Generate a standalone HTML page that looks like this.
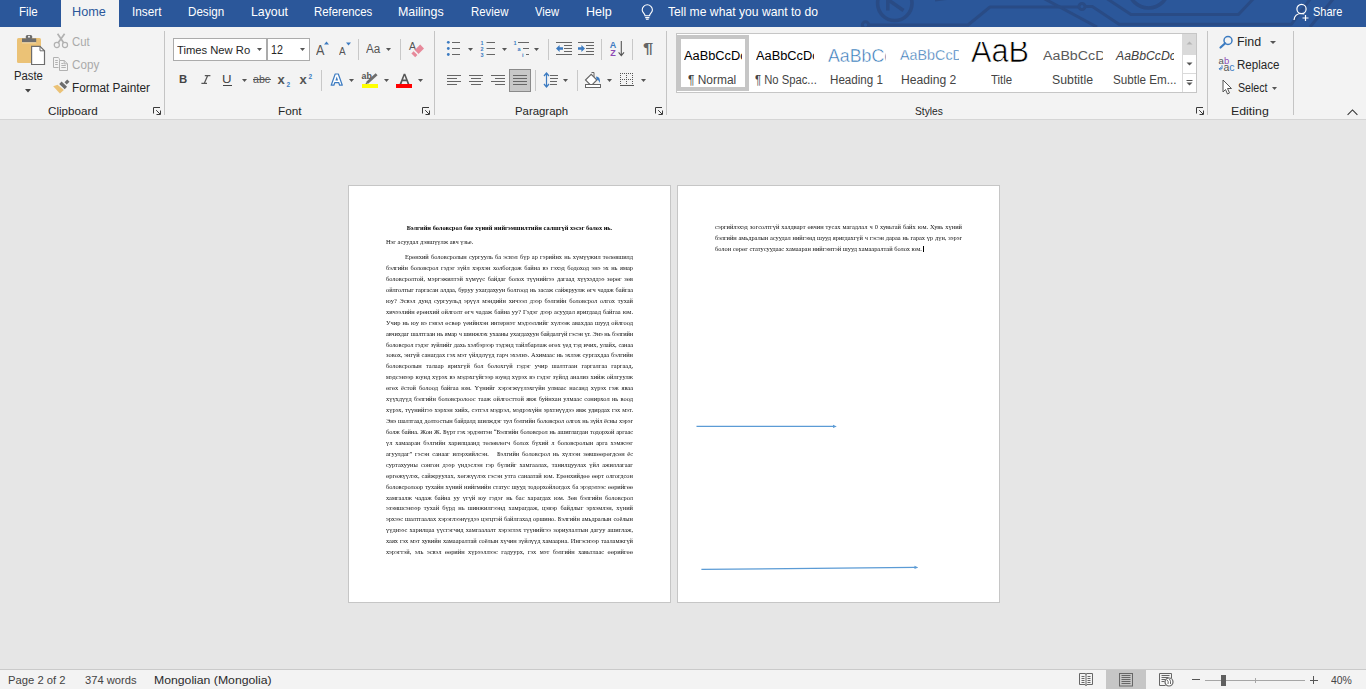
<!DOCTYPE html>
<html><head><meta charset="utf-8"><style>
html,body{margin:0;padding:0}
body{width:1366px;height:689px;overflow:hidden;position:relative;background:#E6E6E6;font-family:"Liberation Sans",sans-serif}
.t{position:absolute;white-space:pre;line-height:1;transform-origin:0 0}
svg{overflow:visible}
.ln{position:absolute;will-change:transform;white-space:nowrap;font-family:"Liberation Serif",serif;font-size:6.4px;line-height:11px;height:11px;color:#111;text-align:justify;text-align-last:justify;overflow:visible}
</style></head><body>
<div style="position:absolute;left:0px;top:0px;width:1366px;height:27px;background:#2B579A;"></div>
<svg style="position:absolute;left:0px;top:0px;overflow:hidden" width="1366" height="27" viewBox="0 0 1366 27"><g fill="none" stroke="#294B85" stroke-width="3" stroke-linejoin="round">
<circle cx="894.8" cy="3.3" r="17.2" stroke-width="3.6"/>
<path d="M887.8 -1 V10.5 M887.8 -0.5 L903.5 10.5" stroke-width="3.6"/>
<path d="M869 25 L968 25 L990 7 L1079 7"/>
<circle cx="865.5" cy="25" r="3.2"/>
<circle cx="1082" cy="6.5" r="3"/>
<circle cx="1148.5" cy="-12" r="20" stroke-width="3.6"/>
<path d="M1106 -2 L1131 14.6 H1238.5 L1254 -2"/>
<path d="M1085 6.5 H1092.3 L1119 24.2 H1291.5 L1311 -2"/>
<path d="M1043 -2 L1097 27"/>
<path d="M1334 -2 L1310 27"/>
<path d="M935 0 L950 -2"/>
</g></svg>
<div style="position:absolute;left:61px;top:0px;width:58px;height:27px;background:#F3F3F3;"></div>
<div class="t" id="tab_file" style="left:19.45px;top:5.29px;font-size:13px;color:#FFFFFF;font-family:'Liberation Sans';font-weight:400;font-style:normal;transform:scaleX(0.8908);">File</div>
<div class="t" id="tab_home" style="left:72.41px;top:5.29px;font-size:13px;color:#2B579A;font-family:'Liberation Sans';font-weight:400;font-style:normal;transform:scaleX(0.9739);">Home</div>
<div class="t" id="tab_insert" style="left:132.09px;top:5.29px;font-size:13px;color:#FFFFFF;font-family:'Liberation Sans';font-weight:400;font-style:normal;transform:scaleX(0.9062);">Insert</div>
<div class="t" id="tab_design" style="left:187.90px;top:5.29px;font-size:13px;color:#FFFFFF;font-family:'Liberation Sans';font-weight:400;font-style:normal;transform:scaleX(0.8951);">Design</div>
<div class="t" id="tab_layout" style="left:251.05px;top:5.29px;font-size:13px;color:#FFFFFF;font-family:'Liberation Sans';font-weight:400;font-style:normal;transform:scaleX(0.9474);">Layout</div>
<div class="t" id="tab_refs" style="left:314.12px;top:5.29px;font-size:13px;color:#FFFFFF;font-family:'Liberation Sans';font-weight:400;font-style:normal;transform:scaleX(0.8769);">References</div>
<div class="t" id="tab_mail" style="left:398.04px;top:5.29px;font-size:13px;color:#FFFFFF;font-family:'Liberation Sans';font-weight:400;font-style:normal;transform:scaleX(0.9574);">Mailings</div>
<div class="t" id="tab_review" style="left:470.67px;top:5.29px;font-size:13px;color:#FFFFFF;font-family:'Liberation Sans';font-weight:400;font-style:normal;transform:scaleX(0.8764);">Review</div>
<div class="t" id="tab_view" style="left:535.00px;top:5.29px;font-size:13px;color:#FFFFFF;font-family:'Liberation Sans';font-weight:400;font-style:normal;transform:scaleX(0.8611);">View</div>
<div class="t" id="tab_help" style="left:586.03px;top:5.29px;font-size:13px;color:#FFFFFF;font-family:'Liberation Sans';font-weight:400;font-style:normal;transform:scaleX(0.9660);">Help</div>
<div class="t" id="tab_tell" style="left:667.97px;top:5.29px;font-size:13px;color:#FFFFFF;font-family:'Liberation Sans';font-weight:400;font-style:normal;transform:scaleX(0.9348);">Tell me what you want to do</div>
<div class="t" id="tab_share" style="left:1313.23px;top:5.29px;font-size:13px;color:#FFFFFF;font-family:'Liberation Sans';font-weight:400;font-style:normal;transform:scaleX(0.8441);">Share</div>
<svg style="position:absolute;left:639px;top:3px;" width="18" height="20" viewBox="0 0 18 20"><g fill="none" stroke="#fff" stroke-width="1.1">
<path d="M6 12.8 C6 10.6 3.2 9.6 3.2 6.9 A5.1 5.1 0 0 1 13.4 6.9 C13.4 9.6 10.6 10.6 10.6 12.8 Z"/>
<path d="M6.2 14.6 H10.4 M6.9 16.2 H9.7"/></g></svg>
<svg style="position:absolute;left:1293px;top:3px;" width="18" height="18" viewBox="0 0 18 18"><g fill="none" stroke="#fff" stroke-width="1.2">
<circle cx="8.5" cy="6" r="4.6"/>
<path d="M1 17 C1.5 12.5 4.5 10.5 8.5 10.5 C9.5 10.5 10.5 10.7 11.3 11"/>
<path d="M12.5 12 V18 M9.5 15 H15.5"/></g></svg>
<div style="position:absolute;left:0px;top:27px;width:1366px;height:92px;background:#F3F3F3;"></div>
<div style="position:absolute;left:61px;top:27px;width:58px;height:1px;background:#F3F3F3;"></div>
<div style="position:absolute;left:0px;top:119px;width:1366px;height:1px;background:#D5D5D5;"></div>
<div style="position:absolute;left:164px;top:31px;width:1px;height:84px;background:#C4C4C4;"></div>
<div style="position:absolute;left:434px;top:31px;width:1px;height:84px;background:#C4C4C4;"></div>
<div style="position:absolute;left:666px;top:31px;width:1px;height:84px;background:#C4C4C4;"></div>
<div style="position:absolute;left:1207px;top:31px;width:1px;height:84px;background:#C4C4C4;"></div>
<div style="position:absolute;left:1293px;top:31px;width:1px;height:84px;background:#C4C4C4;"></div>
<div class="t" id="lbl_clip" style="left:48.22px;top:106.49px;font-size:11px;color:#262626;font-family:'Liberation Sans';font-weight:400;font-style:normal;transform:scaleX(1.0570);">Clipboard</div>
<div class="t" id="lbl_font" style="left:278.48px;top:106.49px;font-size:11px;color:#262626;font-family:'Liberation Sans';font-weight:400;font-style:normal;transform:scaleX(1.0737);">Font</div>
<div class="t" id="lbl_para" style="left:515.35px;top:106.49px;font-size:11px;color:#262626;font-family:'Liberation Sans';font-weight:400;font-style:normal;transform:scaleX(1.0345);">Paragraph</div>
<div class="t" id="lbl_styles" style="left:914.52px;top:106.49px;font-size:11px;color:#262626;font-family:'Liberation Sans';font-weight:400;font-style:normal;transform:scaleX(0.9300);">Styles</div>
<div class="t" id="lbl_edit" style="left:1231.29px;top:106.49px;font-size:11px;color:#262626;font-family:'Liberation Sans';font-weight:400;font-style:normal;transform:scaleX(1.1221);">Editing</div>
<svg style="position:absolute;left:153px;top:107px;" width="9" height="9" viewBox="0 0 9 9"><g fill="none" stroke="#3A3A3A" stroke-width="1"><path d="M0.5 6.5 V0.5 H7"/><path d="M3.2 3.2 L7 7"/><path d="M3.5 7.5 H7.5 V3.5"/></g></svg>
<svg style="position:absolute;left:422px;top:107px;" width="9" height="9" viewBox="0 0 9 9"><g fill="none" stroke="#3A3A3A" stroke-width="1"><path d="M0.5 6.5 V0.5 H7"/><path d="M3.2 3.2 L7 7"/><path d="M3.5 7.5 H7.5 V3.5"/></g></svg>
<svg style="position:absolute;left:655px;top:107px;" width="9" height="9" viewBox="0 0 9 9"><g fill="none" stroke="#3A3A3A" stroke-width="1"><path d="M0.5 6.5 V0.5 H7"/><path d="M3.2 3.2 L7 7"/><path d="M3.5 7.5 H7.5 V3.5"/></g></svg>
<svg style="position:absolute;left:1196px;top:107px;" width="9" height="9" viewBox="0 0 9 9"><g fill="none" stroke="#3A3A3A" stroke-width="1"><path d="M0.5 6.5 V0.5 H7"/><path d="M3.2 3.2 L7 7"/><path d="M3.5 7.5 H7.5 V3.5"/></g></svg>
<svg style="position:absolute;left:1347px;top:109px;" width="12" height="7" viewBox="0 0 12 7"><path d="M0.6 5.8 L5.5 0.9 L10.4 5.8" fill="none" stroke="#333" stroke-width="1.05"/></svg>
<svg style="position:absolute;left:15px;top:33px;" width="32" height="34" viewBox="0 0 32 34">
<rect x="2" y="5" width="24" height="25" rx="1.5" fill="#EBC276"/>
<rect x="7" y="5.4" width="14.2" height="4" fill="#6D6D6D"/>
<rect x="10.8" y="1.9" width="6.4" height="4" rx="1.5" fill="#6D6D6D"/>
<circle cx="14" cy="3.8" r="1" fill="#F3F3F3"/>
<rect x="7" y="9.4" width="14.2" height="0.9" fill="#F6E2BA"/>
<path d="M16.6 13.3 H25 L29.5 17.8 V31.5 H16.6 Z" fill="#fff" stroke="#6D6D6D" stroke-width="1.2"/>
<path d="M25 13.3 V17.8 H29.5" fill="none" stroke="#6D6D6D" stroke-width="1"/>
</svg>
<div class="t" id="cb_paste" style="left:14.22px;top:69.64px;font-size:12px;color:#262626;font-family:'Liberation Sans';font-weight:400;font-style:normal;transform:scaleX(0.9404);">Paste</div>
<svg style="position:absolute;left:25px;top:89px;" width="7" height="4" viewBox="0 0 7 4"><path d="M0 0 H6 L3 3.5 Z" fill="#444"/></svg>
<svg style="position:absolute;left:53px;top:33px;" width="16" height="16" viewBox="0 0 16 16"><g fill="none" stroke="#B1B1B1">
<circle cx="3.8" cy="12" r="2.55" stroke-width="1.2"/><circle cx="12" cy="12" r="2.55" stroke-width="1.2"/>
<path d="M4.6 0.8 L10.6 9.7 M11.6 0.8 L5.2 9.7" stroke-width="1.7"/></g></svg>
<div class="t" id="cb_cut" style="left:72.41px;top:35.84px;font-size:12px;color:#AAAAAA;font-family:'Liberation Sans';font-weight:400;font-style:normal;transform:scaleX(0.9474);">Cut</div>
<svg style="position:absolute;left:53px;top:57px;" width="16" height="15" viewBox="0 0 16 15"><g fill="none" stroke="#B1B1B1" stroke-width="1">
<path d="M6.5 2.8 V1.8 L5.2 0.5 H0.5 V10.5 H5.5"/>
<path d="M2.2 3.5 H4.8 M2.2 5.5 H4.8 M2.2 7.5 H4.8"/>
<path d="M6.5 3.5 H11.2 L14.5 6.8 V13.5 H6.5 Z" fill="#F3F3F3"/>
<path d="M11.2 3.5 V6.8 H14.5 M8.3 6.5 H10.5 M8.3 8.5 H12.8 M8.3 10.5 H12.8"/></g></svg>
<div class="t" id="cb_copy" style="left:72.40px;top:58.54px;font-size:12px;color:#AAAAAA;font-family:'Liberation Sans';font-weight:400;font-style:normal;transform:scaleX(0.9714);">Copy</div>
<svg style="position:absolute;left:53px;top:80px;" width="17" height="15" viewBox="0 0 17 15">
<path d="M0.2 6.2 L4.5 4.7 L10.9 9.9 L6.9 13.4 Z" fill="#EBC276"/>
<path d="M7.4 2.7 L12.9 7.9" stroke="#6D6D6D" stroke-width="3.4"/>
<path d="M12.6 3.4 L15.4 0.7" stroke="#6D6D6D" stroke-width="3.2"/>
</svg>
<div class="t" id="cb_fp" style="left:71.51px;top:81.64px;font-size:12px;color:#262626;font-family:'Liberation Sans';font-weight:400;font-style:normal;transform:scaleX(0.9823);">Format Painter</div>
<div style="position:absolute;left:173px;top:38px;width:94px;height:23px;background:#FFFFFF;box-sizing:border-box;border:1px solid #ABABAB"></div>
<div style="position:absolute;left:267px;top:38px;width:43px;height:23px;background:#FFFFFF;box-sizing:border-box;border:1px solid #ABABAB"></div>
<div class="t" id="f_name" style="left:177.00px;top:44.56px;font-size:11.5px;color:#262626;font-family:'Liberation Sans';font-weight:400;font-style:normal;transform:scaleX(0.9761);">Times New Ro</div>
<div class="t" id="f_size" style="left:270.57px;top:44.14px;font-size:12px;color:#262626;font-family:'Liberation Sans';font-weight:400;font-style:normal;transform:scaleX(0.8929);">12</div>
<svg style="position:absolute;left:257px;top:48px;" width="6" height="4" viewBox="0 0 6 4"><path d="M0 0 H5 L2.5 3 Z" fill="#555"/></svg>
<svg style="position:absolute;left:300px;top:48px;" width="6" height="4" viewBox="0 0 6 4"><path d="M0 0 H5 L2.5 3 Z" fill="#555"/></svg>
<div class="t" id="f_grow" style="left:316.16px;top:42.85px;font-size:14px;color:#555;font-family:'Liberation Sans';font-weight:400;font-style:normal;transform:scaleX(0.9000);font-weight:400">A</div>
<svg style="position:absolute;left:324px;top:41px;" width="6" height="4" viewBox="0 0 6 4"><path d="M0 3.5 H5 L2.5 0.5 Z" fill="#3C7BC1"/></svg>
<div class="t" id="f_shrink" style="left:339.10px;top:46.39px;font-size:11px;color:#555;font-family:'Liberation Sans';font-weight:400;font-style:normal;transform:scaleX(0.9075);">A</div>
<svg style="position:absolute;left:346px;top:42px;" width="6" height="4" viewBox="0 0 6 4"><path d="M0 0.5 H5 L2.5 3.5 Z" fill="#3C7BC1"/></svg>
<div style="position:absolute;left:358px;top:39px;width:1px;height:21px;background:#C8C8C8;"></div>
<div class="t" id="f_case" style="left:366.00px;top:42.54px;font-size:12px;color:#555;font-family:'Liberation Sans';font-weight:400;font-style:normal;transform:scaleX(0.9735);">Aa</div>
<svg style="position:absolute;left:386px;top:48px;" width="6" height="4" viewBox="0 0 6 4"><path d="M0 0 H5 L2.5 3 Z" fill="#555"/></svg>
<div style="position:absolute;left:400px;top:39px;width:1px;height:21px;background:#C8C8C8;"></div>
<svg style="position:absolute;left:409px;top:41px;" width="16" height="16" viewBox="0 0 16 16">
<text x="0" y="8.7" font-family="Liberation Sans" font-size="10.5" fill="#555">A</text>
<path d="M4.3 14.3 L13.1 5.5" stroke="#E7899A" stroke-width="5.4"/>
<path d="M4.9 9.4 L9.5 14" stroke="#F3F3F3" stroke-width="1.5"/>
</svg>
<div class="t" id="f_b" style="left:179.16px;top:74.09px;font-size:11px;color:#444;font-family:'Liberation Sans';font-weight:700;font-style:normal;transform:scaleX(1.0314);">B</div>
<svg style="position:absolute;left:201px;top:75px;" width="10" height="10" viewBox="0 0 10 10"><path d="M3.8 0.6 H9.4 M0.4 8.4 H6 M6.7 0.6 L3.2 8.4" fill="none" stroke="#555" stroke-width="1.25"/></svg>
<div class="t" id="f_u" style="left:221.62px;top:74.09px;font-size:11px;color:#444;font-family:'Liberation Sans';font-weight:400;font-style:normal;transform:scaleX(1.2000);">U</div>
<div style="position:absolute;left:223px;top:85px;width:9px;height:1px;background:#444;"></div>
<svg style="position:absolute;left:242px;top:79px;" width="6" height="4" viewBox="0 0 6 4"><path d="M0 0 H5 L2.5 3 Z" fill="#555"/></svg>
<div class="t" id="f_abc" style="left:253.41px;top:74.09px;font-size:11px;color:#555;font-family:'Liberation Sans';font-weight:400;font-style:normal;transform:scaleX(0.9650);">abc</div>
<div style="position:absolute;left:253px;top:79px;width:18px;height:1px;background:#555;"></div>
<svg style="position:absolute;left:277px;top:73px;" width="15" height="15" viewBox="0 0 15 15"><text x="0.5" y="10.5" font-family="Liberation Sans" font-size="13" font-weight="700" fill="#555">x</text><text x="9.5" y="13.5" font-family="Liberation Sans" font-size="6.5" font-weight="700" fill="#3C7BC1">2</text></svg>
<svg style="position:absolute;left:299px;top:73px;" width="15" height="15" viewBox="0 0 15 15"><text x="0.5" y="10.5" font-family="Liberation Sans" font-size="13" font-weight="700" fill="#555">x</text><text x="9.5" y="5.5" font-family="Liberation Sans" font-size="6.5" font-weight="700" fill="#3C7BC1">2</text></svg>
<div style="position:absolute;left:321px;top:70px;width:1px;height:21px;background:#C8C8C8;"></div>
<svg style="position:absolute;left:330px;top:73px;" width="14" height="14" viewBox="0 0 14 14"><path d="M1.2 12.2 L5.2 1 H8.3 L12.3 12.2 H9.6 L8.8 9.7 H4.7 L3.9 12.2 Z" fill="#fff" stroke="#3C7BC1" stroke-width="1.2" stroke-linejoin="round"/><path d="M5.4 7.6 H8.1 L6.75 3.6 Z" fill="#3C7BC1"/></svg>
<svg style="position:absolute;left:349px;top:79px;" width="6" height="4" viewBox="0 0 6 4"><path d="M0 0 H5 L2.5 3 Z" fill="#555"/></svg>
<svg style="position:absolute;left:361px;top:72px;" width="18" height="17" viewBox="0 0 18 17">
<text x="0.6" y="6.6" font-family="Liberation Sans" font-size="8.8" font-weight="700" fill="#555">ab</text>
<path d="M6.2 10.8 L15.6 2.2" stroke="#6D6D6D" stroke-width="2.8"/>
<path d="M5 12 L6.6 10.2" stroke="#6D6D6D" stroke-width="1.5"/>
<rect x="1" y="12" width="16" height="4" fill="#FFFF00"/></svg>
<svg style="position:absolute;left:384px;top:79px;" width="6" height="4" viewBox="0 0 6 4"><path d="M0 0 H5 L2.5 3 Z" fill="#555"/></svg>
<svg style="position:absolute;left:396px;top:72px;" width="17" height="17" viewBox="0 0 17 17">
<path d="M3.6 12 L7.7 1.8 H9.3 L13.4 12 H11.5 L10.5 9.2 H6.5 L5.5 12 Z M7.1 7.5 H9.9 L8.5 3.8 Z" fill="#555"/>
<rect x="0" y="12" width="16" height="4" fill="#FF0000"/></svg>
<svg style="position:absolute;left:418px;top:79px;" width="6" height="4" viewBox="0 0 6 4"><path d="M0 0 H5 L2.5 3 Z" fill="#555"/></svg>
<svg style="position:absolute;left:446px;top:40px;" width="16" height="16" viewBox="0 0 16 16"><g fill="#3C7BC1"><circle cx="2.3" cy="2.3" r="1.4"/><circle cx="2.3" cy="8.5" r="1.4"/><circle cx="2.3" cy="14.5" r="1.4"/></g>
<g stroke="#666" stroke-width="1"><path d="M6 2.5 H14 M6 8.5 H14 M6 14.5 H14"/></g></svg>
<svg style="position:absolute;left:468px;top:48px;" width="6" height="4" viewBox="0 0 6 4"><path d="M0 0 H5 L2.5 3 Z" fill="#555"/></svg>
<svg style="position:absolute;left:480px;top:40px;" width="16" height="17" viewBox="0 0 16 17"><g fill="#3C7BC1" font-family="Liberation Sans" font-size="5.5" font-weight="700"><text x="0.5" y="5">1</text><text x="0.5" y="11">2</text><text x="0.5" y="17">3</text></g>
<g stroke="#666" stroke-width="1"><path d="M6.5 2.5 H15 M6.5 8.5 H15 M6.5 14.5 H15"/></g></svg>
<svg style="position:absolute;left:502px;top:48px;" width="6" height="4" viewBox="0 0 6 4"><path d="M0 0 H5 L2.5 3 Z" fill="#555"/></svg>
<svg style="position:absolute;left:513px;top:40px;" width="18" height="17" viewBox="0 0 18 17"><g fill="#3C7BC1" font-family="Liberation Sans" font-size="5.5" font-weight="700"><text x="0.5" y="5">1</text><text x="4.5" y="11">a</text><text x="9" y="17">i</text></g>
<g stroke="#666" stroke-width="1"><path d="M5 2.5 H16 M10 8.5 H16 M13 14.5 H16"/></g></svg>
<svg style="position:absolute;left:534px;top:48px;" width="6" height="4" viewBox="0 0 6 4"><path d="M0 0 H5 L2.5 3 Z" fill="#555"/></svg>
<div style="position:absolute;left:548px;top:39px;width:1px;height:21px;background:#C8C8C8;"></div>
<svg style="position:absolute;left:555px;top:42px;" width="18" height="14" viewBox="0 0 18 14"><g stroke="#666" stroke-width="1"><path d="M1 0.5 H17 M9 3.5 H17 M9 6.5 H17 M9 9.5 H17 M1 12.5 H17"/></g>
<path d="M1 6.5 L4.6 3 V5.3 H8 V7.7 H4.6 V10 Z" fill="#3C7BC1"/></svg>
<svg style="position:absolute;left:577px;top:42px;" width="18" height="14" viewBox="0 0 18 14"><g stroke="#666" stroke-width="1"><path d="M1 0.5 H17 M9 3.5 H17 M9 6.5 H17 M9 9.5 H17 M1 12.5 H17"/></g>
<path d="M8 6.5 L4.4 3 V5.3 H1 V7.7 H4.4 V10 Z" fill="#3C7BC1"/></svg>
<div style="position:absolute;left:601px;top:39px;width:1px;height:21px;background:#C8C8C8;"></div>
<svg style="position:absolute;left:609px;top:40px;" width="17" height="17" viewBox="0 0 17 17"><text x="0.8" y="8" font-family="Liberation Sans" font-size="9" font-weight="700" fill="#3C7BC1">A</text>
<text x="1.3" y="16" font-family="Liberation Sans" font-size="9" font-weight="700" fill="#8E49B5">Z</text>
<path d="M12.3 1 V15.3 M9.6 12.3 L12.3 15.6 L15 12.3" fill="none" stroke="#555" stroke-width="1.1"/></svg>
<div style="position:absolute;left:632px;top:39px;width:1px;height:21px;background:#C8C8C8;"></div>
<div class="t" id="p_pil" style="left:643.00px;top:40.00px;font-size:15px;color:#666;font-family:'Liberation Sans';font-weight:700;font-style:normal;transform:scaleX(1.2251);">¶</div>
<svg style="position:absolute;left:446px;top:75px;" width="16" height="13" viewBox="0 0 16 13"><g stroke="#666" stroke-width="1"><path d="M1 0.5 H15"/><path d="M1 3.5 H11"/><path d="M1 6.5 H15"/><path d="M1 9.5 H11"/></g></svg>
<svg style="position:absolute;left:468px;top:75px;" width="16" height="13" viewBox="0 0 16 13"><g stroke="#666" stroke-width="1"><path d="M1 0.5 H15"/><path d="M3 3.5 H13"/><path d="M1 6.5 H15"/><path d="M3 9.5 H13"/></g></svg>
<svg style="position:absolute;left:490px;top:75px;" width="16" height="13" viewBox="0 0 16 13"><g stroke="#666" stroke-width="1"><path d="M1 0.5 H15"/><path d="M5 3.5 H15"/><path d="M1 6.5 H15"/><path d="M5 9.5 H15"/></g></svg>
<div style="position:absolute;left:509px;top:69px;width:22px;height:23px;background:#C8C8C8;box-sizing:border-box;border:1px solid #8A8A8A"></div>
<svg style="position:absolute;left:512px;top:75px;" width="16" height="13" viewBox="0 0 16 13"><g stroke="#666" stroke-width="1"><path d="M1 0.5 H15"/><path d="M1 3.5 H15"/><path d="M1 6.5 H15"/><path d="M1 9.5 H15"/></g></svg>
<div style="position:absolute;left:535px;top:70px;width:1px;height:21px;background:#C8C8C8;"></div>
<svg style="position:absolute;left:543px;top:72px;" width="16" height="16" viewBox="0 0 16 16"><path d="M3.5 1.5 V14.5" stroke="#3C7BC1" stroke-width="1.2"/>
<path d="M1 4 L3.5 1 L6 4 M1 12 L3.5 15 L6 12" fill="none" stroke="#3C7BC1" stroke-width="1.3"/>
<g stroke="#666" stroke-width="1"><path d="M7 3.5 H15 M7 6.5 H15 M7 9.5 H14 M7 12.5 H14"/></g></svg>
<svg style="position:absolute;left:563px;top:79px;" width="6" height="4" viewBox="0 0 6 4"><path d="M0 0 H5 L2.5 3 Z" fill="#555"/></svg>
<div style="position:absolute;left:577px;top:70px;width:1px;height:21px;background:#C8C8C8;"></div>
<svg style="position:absolute;left:584px;top:72px;" width="18" height="16" viewBox="0 0 18 16"><path d="M7.5 0.5 H10 V5" fill="none" stroke="#666" stroke-width="1"/>
<path d="M1.5 8 L7.2 2.3 L12.9 8 L7.2 13.7 Z" fill="#fff" stroke="#666" stroke-width="1.1"/>
<path d="M12 4.5 Q16.8 4.8 15.8 11 Q14.8 8 12.6 7.6 Z" fill="#3C7BC1"/>
<rect x="1.5" y="12.5" width="15" height="3" fill="#fff" stroke="#666" stroke-width="1"/></svg>
<svg style="position:absolute;left:607px;top:79px;" width="6" height="4" viewBox="0 0 6 4"><path d="M0 0 H5 L2.5 3 Z" fill="#555"/></svg>
<svg style="position:absolute;left:620px;top:73px;" width="14" height="14" viewBox="0 0 14 14"><g fill="#555"><rect x="0" y="0" width="1" height="1"/><rect x="2" y="0" width="1" height="1"/><rect x="4" y="0" width="1" height="1"/><rect x="6" y="0" width="1" height="1"/><rect x="8" y="0" width="1" height="1"/><rect x="10" y="0" width="1" height="1"/><rect x="12" y="0" width="1" height="1"/><rect x="0" y="6" width="1" height="1"/><rect x="2" y="6" width="1" height="1"/><rect x="4" y="6" width="1" height="1"/><rect x="6" y="6" width="1" height="1"/><rect x="8" y="6" width="1" height="1"/><rect x="10" y="6" width="1" height="1"/><rect x="12" y="6" width="1" height="1"/><rect x="0" y="0" width="1" height="1"/><rect x="0" y="2" width="1" height="1"/><rect x="0" y="4" width="1" height="1"/><rect x="0" y="6" width="1" height="1"/><rect x="0" y="8" width="1" height="1"/><rect x="0" y="10" width="1" height="1"/><rect x="6" y="0" width="1" height="1"/><rect x="6" y="2" width="1" height="1"/><rect x="6" y="4" width="1" height="1"/><rect x="6" y="6" width="1" height="1"/><rect x="6" y="8" width="1" height="1"/><rect x="6" y="10" width="1" height="1"/><rect x="12" y="0" width="1" height="1"/><rect x="12" y="2" width="1" height="1"/><rect x="12" y="4" width="1" height="1"/><rect x="12" y="6" width="1" height="1"/><rect x="12" y="8" width="1" height="1"/><rect x="12" y="10" width="1" height="1"/></g><rect x="0" y="12" width="14" height="1" fill="#555"/></svg>
<svg style="position:absolute;left:641px;top:79px;" width="6" height="4" viewBox="0 0 6 4"><path d="M0 0 H5 L2.5 3 Z" fill="#555"/></svg>
<div style="position:absolute;left:676px;top:33px;width:521px;height:60px;background:#FFFFFF;box-sizing:border-box;border:1px solid #C6C6C6"></div>
<div style="position:absolute;left:677px;top:35px;width:72px;height:56px;background:transparent;box-sizing:border-box;border:4px solid #C6C6C6"></div>
<div style="position:absolute;left:1182px;top:34px;width:14px;height:58px;background:#FFFFFF;box-sizing:border-box;border-left:1px solid #DADADA"></div>
<div style="position:absolute;left:1183px;top:34px;width:13px;height:20px;background:#DADADA;"></div>
<div style="position:absolute;left:1183px;top:54px;width:13px;height:1px;background:#DADADA;"></div>
<div style="position:absolute;left:1183px;top:73px;width:13px;height:1px;background:#DADADA;"></div>
<svg style="position:absolute;left:1186px;top:41px;" width="7" height="4" viewBox="0 0 7 4"><path d="M0.5 3.5 H6.5 L3.5 0.5 Z" fill="#B5B5B5"/></svg>
<svg style="position:absolute;left:1186px;top:62px;" width="7" height="4" viewBox="0 0 7 4"><path d="M0.5 0.5 H6.5 L3.5 3.5 Z" fill="#555"/></svg>
<svg style="position:absolute;left:1186px;top:80px;" width="7" height="7" viewBox="0 0 7 7"><path d="M0.5 0.5 H6.5" stroke="#555" stroke-width="1"/><path d="M0.5 2.5 H6.5 L3.5 5.5 Z" fill="#555"/></svg>
<div style="position:absolute;left:680px;top:40px;width:62px;height:30px;overflow:hidden">
<div class="t" id="s_n1" style="left:4.00px;top:9.64px;font-size:12px;color:#000;font-family:'Liberation Sans';font-weight:400;font-style:normal;transform:scaleX(1.0681);">AaBbCcDc</div>
</div>
<div class="t" id="s_n2" style="left:688.00px;top:73.84px;font-size:12px;color:#444;font-family:'Liberation Sans';font-weight:400;font-style:normal;transform:scaleX(0.9960);">¶ Normal</div>
<div style="position:absolute;left:750px;top:40px;width:64px;height:30px;overflow:hidden">
<div class="t" id="s_ns1" style="left:6.24px;top:9.64px;font-size:12px;color:#000;font-family:'Liberation Sans';font-weight:400;font-style:normal;transform:scaleX(1.0681);">AaBbCcDc</div>
</div>
<div class="t" id="s_ns2" style="left:754.53px;top:73.84px;font-size:12px;color:#444;font-family:'Liberation Sans';font-weight:400;font-style:normal;transform:scaleX(0.9385);">¶ No Spac...</div>
<div style="position:absolute;left:820px;top:40px;width:66px;height:30px;overflow:hidden">
<div class="t" id="s_h1" style="left:8.00px;top:7.98px;font-size:17.5px;color:#2E74B5;font-family:'Liberation Sans';font-weight:400;font-style:normal;transform:scaleX(1.0134);-webkit-text-stroke:0.45px #fff">AaBbCc</div>
</div>
<div class="t" id="s_h1l" style="left:829.52px;top:73.84px;font-size:12px;color:#444;font-family:'Liberation Sans';font-weight:400;font-style:normal;transform:scaleX(0.9667);">Heading 1</div>
<div style="position:absolute;left:895px;top:40px;width:63.5px;height:30px;overflow:hidden">
<div class="t" id="s_h2" style="left:5.00px;top:7.75px;font-size:14px;color:#2E74B5;font-family:'Liberation Sans';font-weight:400;font-style:normal;transform:scaleX(1.0243);-webkit-text-stroke:0.35px #fff">AaBbCcD</div>
</div>
<div class="t" id="s_h2l" style="left:901.18px;top:73.84px;font-size:12px;color:#444;font-family:'Liberation Sans';font-weight:400;font-style:normal;transform:scaleX(1.0113);">Heading 2</div>
<div style="position:absolute;left:965px;top:42px;width:70px;height:28px;overflow:hidden">
<div class="t" id="s_ti" style="left:6.13px;top:-8.24px;font-size:33px;color:#000;font-family:'Liberation Sans';font-weight:400;font-style:normal;transform:scaleX(0.9303);-webkit-text-stroke:0.7px #fff">AaB</div>
</div>
<div class="t" id="s_til" style="left:991.00px;top:73.84px;font-size:12px;color:#444;font-family:'Liberation Sans';font-weight:400;font-style:normal;transform:scaleX(0.9545);">Title</div>
<div style="position:absolute;left:1038px;top:40px;width:64.5px;height:30px;overflow:hidden">
<div class="t" id="s_st" style="left:5.49px;top:9.64px;font-size:12px;color:#5A5A5A;font-family:'Liberation Sans';font-weight:400;font-style:normal;transform:scaleX(1.1842);">AaBbCcD</div>
</div>
<div class="t" id="s_stl" style="left:1051.97px;top:73.84px;font-size:12px;color:#444;font-family:'Liberation Sans';font-weight:400;font-style:normal;transform:scaleX(1.0256);">Subtitle</div>
<div style="position:absolute;left:1110px;top:40px;width:64px;height:30px;overflow:hidden">
<div class="t" id="s_se" style="left:6.43px;top:9.94px;font-size:12px;color:#404040;font-family:'Liberation Sans';font-weight:400;font-style:italic;transform:scaleX(1.0201);">AaBbCcDc</div>
</div>
<div class="t" id="s_sel" style="left:1113.03px;top:74.34px;font-size:12px;color:#444;font-family:'Liberation Sans';font-weight:400;font-style:normal;transform:scaleX(0.9720);">Subtle Em...</div>
<svg style="position:absolute;left:1219px;top:35px;" width="15" height="13" viewBox="0 0 15 13"><circle cx="9" cy="5.5" r="4" fill="none" stroke="#3C7BC1" stroke-width="1.5"/>
<path d="M6.2 8.3 L1.5 12.5" stroke="#3C7BC1" stroke-width="2.2" stroke-linecap="round"/></svg>
<div class="t" id="e_find" style="left:1236.86px;top:35.74px;font-size:12px;color:#262626;font-family:'Liberation Sans';font-weight:400;font-style:normal;transform:scaleX(1.0367);">Find</div>
<svg style="position:absolute;left:1270px;top:41px;" width="7" height="4" viewBox="0 0 7 4"><path d="M0 0 H6 L3 3 Z" fill="#555"/></svg>
<svg style="position:absolute;left:1218px;top:56px;" width="18" height="16" viewBox="0 0 18 16"><g font-family="Liberation Sans" font-size="9.5">
<text x="0.6" y="7.6" fill="#555">a</text><text x="5.9" y="7.6" fill="#8E49B5">b</text>
<text x="5.6" y="14.6" fill="#555" font-size="10.5">a</text><text x="11.2" y="14.6" fill="#3C7BC1" font-size="10.5">c</text></g>
<path d="M4 9.3 V12.8 H1.3 M2.7 11.3 L1.2 12.8 L2.7 14.3" fill="none" stroke="#3C7BC1" stroke-width="1"/></svg>
<div class="t" id="e_repl" style="left:1236.91px;top:58.74px;font-size:12px;color:#262626;font-family:'Liberation Sans';font-weight:400;font-style:normal;transform:scaleX(0.9631);">Replace</div>
<svg style="position:absolute;left:1222px;top:79px;" width="11" height="16" viewBox="0 0 11 16"><path d="M1 1 L9.5 9.5 H5.5 L7.5 14 L5.5 15 L3.5 10.5 L1 13 Z" fill="#fff" stroke="#555" stroke-width="1" stroke-linejoin="round"/></svg>
<div class="t" id="e_sel" style="left:1237.97px;top:81.64px;font-size:12px;color:#262626;font-family:'Liberation Sans';font-weight:400;font-style:normal;transform:scaleX(0.8856);">Select</div>
<svg style="position:absolute;left:1272px;top:87px;" width="6" height="4" viewBox="0 0 6 4"><path d="M0 0 H5 L2.5 3 Z" fill="#555"/></svg>
<div style="position:absolute;left:0px;top:669px;width:1366px;height:1px;background:#CACACA;"></div>
<div style="position:absolute;left:0px;top:670px;width:1366px;height:19px;background:#F3F3F3;"></div>
<div class="t" id="st_page" style="left:7.95px;top:674.59px;font-size:11px;color:#444;font-family:'Liberation Sans';font-weight:400;font-style:normal;transform:scaleX(1.0225);">Page 2 of 2</div>
<div class="t" id="st_words" style="left:84.51px;top:674.59px;font-size:11px;color:#444;font-family:'Liberation Sans';font-weight:400;font-style:normal;transform:scaleX(1.0164);">374 words</div>
<div class="t" id="st_lang" style="left:153.93px;top:674.59px;font-size:11px;color:#2B2B2B;font-family:'Liberation Sans';font-weight:400;font-style:normal;transform:scaleX(1.1116);">Mongolian (Mongolia)</div>
<div class="t" id="st_zoom" style="left:1330.99px;top:675.49px;font-size:11px;color:#444;font-family:'Liberation Sans';font-weight:400;font-style:normal;transform:scaleX(0.9488);">40%</div>
<div style="position:absolute;left:1106px;top:670px;width:40px;height:19px;background:#C6C6C6;"></div>
<svg style="position:absolute;left:1079px;top:672px;" width="14" height="15" viewBox="0 0 14 15"><g fill="none" stroke="#666" stroke-width="1">
<path d="M0.5 1.5 H6.5 L7 2.5 L7.5 1.5 H13.5 V12.5 H8 L7 13.5 L6 12.5 H0.5 Z"/>
<path d="M7 2 V14"/>
<path d="M2.5 4.5 H5.5 M2.5 6.5 H5.5 M2.5 8.5 H5.5 M2.5 10.5 H5.5 M8.5 4.5 H11.5 M8.5 6.5 H11.5 M8.5 8.5 H11.5 M8.5 10.5 H11.5"/></g></svg>
<svg style="position:absolute;left:1119px;top:673px;" width="14" height="14" viewBox="0 0 14 14"><rect x="0.5" y="0.5" width="13" height="12.5" fill="none" stroke="#666" stroke-width="1"/>
<g stroke="#666" stroke-width="1"><path d="M2.5 2.5 H11.5 M2.5 4.5 H11.5 M2.5 6.5 H11.5 M2.5 8.5 H11.5 M2.5 10.5 H11.5"/></g></svg>
<svg style="position:absolute;left:1159px;top:673px;" width="15" height="14" viewBox="0 0 15 14"><path d="M6.5 12.5 H0.5 V0.5 H12.5 V5" fill="none" stroke="#666" stroke-width="1"/>
<g stroke="#666" stroke-width="1"><path d="M2.5 2.5 H10.5 M2.5 4.5 H9.5 M2.5 6.5 H6.5 M2.5 8.5 H5.5"/></g>
<circle cx="10" cy="9" r="4" fill="#fff" stroke="#666" stroke-width="1.2"/>
<path d="M8 7 Q10 8.5 9 11 M10.5 6 Q12 8 11.5 11" fill="none" stroke="#666" stroke-width="1"/></svg>
<div style="position:absolute;left:1192px;top:679px;width:8px;height:1px;background:#555;"></div>
<div style="position:absolute;left:1205px;top:680px;width:100px;height:1px;background:#A6A6A6;"></div>
<div style="position:absolute;left:1255px;top:678px;width:1px;height:5px;background:#A6A6A6;"></div>
<div style="position:absolute;left:1221px;top:675px;width:5px;height:11px;background:#5F5F5F;"></div>
<div style="position:absolute;left:1310px;top:680px;width:8px;height:1px;background:#555;"></div>
<div style="position:absolute;left:1313px;top:676px;width:1px;height:8px;background:#555;"></div>
<div style="position:absolute;left:348px;top:185px;width:323px;height:418px;background:#FFFFFF;box-sizing:border-box;border:1px solid #C6C6C6"></div>
<div style="position:absolute;left:677px;top:185px;width:323px;height:418px;background:#FFFFFF;box-sizing:border-box;border:1px solid #C6C6C6"></div>
<div class="ln" id="d_title" style="left:386px;top:221.54px;width:247px;font-weight:700;text-align:center;text-align-last:center;">Бэлгийн боловсрол бие хүний нийгэмшилтийн салшгүй хэсэг болох нь.</div>
<style>#d_title{color:#000}</style>
<div class="ln" id="d_l0" style="left:386px;top:236.34px;width:247px;font-weight:400;text-align:left;text-align-last:left;">Нэг асуудал дэвшүүлж авч үзье.</div>
<div class="ln" id="d_p0" style="left:405px;top:251.14px;width:228px;font-weight:400;">Ерөнхий боловсролын сургууль ба эсвэл бүр ар гэрийнх нь хүмүүжил төлөвшилд</div>
<div class="ln" id="d_p1" style="left:386px;top:262.07px;width:247px;font-weight:400;">бэлгийн боловсрол гэдэг зүйл хэрхэн холбогдож байна вэ гэхэд бодоход энэ эх нь ямар</div>
<div class="ln" id="d_p2" style="left:386px;top:272.99px;width:247px;font-weight:400;">боловсролтой, мэргэжилтэй хүмүүс байдаг болох түүнийгээ дагаад хүүхэддээ зөрөг зөв</div>
<div class="ln" id="d_p3" style="left:386px;top:283.92px;width:247px;font-weight:400;letter-spacing:-0.065px;">ойлголтыг гаргасан алдаа, буруу ухагдахуун болгоод нь засаж сайжруулж өгч чадаж байгаа</div>
<div class="ln" id="d_p4" style="left:386px;top:294.85px;width:247px;font-weight:400;">юу? Эсвэл дунд сургуульд эрүүл мэндийн хичээл дээр бэлгийн боловсрол олгох тухай</div>
<div class="ln" id="d_p5" style="left:386px;top:305.77px;width:247px;font-weight:400;">хичээлийн ерөнхий ойлголт өгч чадаж байна уу? Гэдэг дээр асуудал яригдаад байгаа юм.</div>
<div class="ln" id="d_p6" style="left:386px;top:316.70px;width:247px;font-weight:400;">Учир нь юу вэ гэвэл өсвөр үеийнхэн интернэт мэдээллийг хүлээж авахдаа шууд ойлгоод</div>
<div class="ln" id="d_p7" style="left:386px;top:327.62px;width:247px;font-weight:400;letter-spacing:-0.143px;">авчихдаг шалтгаан нь ямар ч шинжлэх ухааны ухагдахуун байдалгүй гэсэн үг. Энэ нь бэлгийн</div>
<div class="ln" id="d_p8" style="left:386px;top:338.55px;width:247px;font-weight:400;letter-spacing:-0.065px;">боловсрол гэдэг зүйлийг дахь хэлбэрээр тэдэнд тайлбарлаж өгөх үед тэд ичих, улайх, санаа</div>
<div class="ln" id="d_p9" style="left:386px;top:349.48px;width:247px;font-weight:400;letter-spacing:-0.007px;">зовох, энгүй санагдах гэх мэт үйлдлүүд гарч эхэлнэ. Ахимаас нь эхлэж сургахдаа бэлгийн</div>
<div class="ln" id="d_p10" style="left:386px;top:360.40px;width:247px;font-weight:400;">боловсролын талаар ярихгүй бол болохгүй гэдэг учир шалтгаан гаргалгаа гаргаад,</div>
<div class="ln" id="d_p11" style="left:386px;top:371.33px;width:247px;font-weight:400;">мэдсэнээр юунд хүрэх вэ мэдэхгүйгээр юунд хүрэх вэ гэдэг зүйлд анализ хийж ойлгуулж</div>
<div class="ln" id="d_p12" style="left:386px;top:382.25px;width:247px;font-weight:400;">өгөх ёстой болоод байгаа юм. Үүнийг хэрэгжүүлэхгүйн улмаас насанд хүрэх гэж яваа</div>
<div class="ln" id="d_p13" style="left:386px;top:393.18px;width:247px;font-weight:400;">хүүхдүүд бэлгийн боловсролоос тааж ойлгосттой явж буйнхан улмаас сонирхол нь воод</div>
<div class="ln" id="d_p14" style="left:386px;top:404.11px;width:247px;font-weight:400;">хүрэх, түүнийгээ хэрхэн хийх, сэтгэл мэдрэл, мэдрэхүйн эрхтнүүдээ явж удирдах гэх мэт.</div>
<div class="ln" id="d_p15" style="left:386px;top:415.03px;width:247px;font-weight:400;letter-spacing:-0.092px;">Энэ шалтгаад долтостын байдалд шилждэг тул бэлгийн боловсрол олгох нь зүйл ёсны хэрэг</div>
<div class="ln" id="d_p16" style="left:386px;top:425.96px;width:247px;font-weight:400;letter-spacing:-0.067px;">болж байна. Жон Ж. Бүрт гэх эрдэмтэн “Бэлгийн боловсрол нь ашиглагдан тодорхой аргаас</div>
<div class="ln" id="d_p17" style="left:386px;top:436.88px;width:247px;font-weight:400;">үл хамааран бэлгийн харилцаанд төлөвлөгч болох бүхий л боловсролын арга хэмжээг</div>
<div class="ln" id="d_p18" style="left:386px;top:447.81px;width:247px;font-weight:400;">агуулдаг” гэсэн санааг илэрхийлсэн.<span style='display:inline-block;width:8px'></span>Бэлгийн боловсрол нь хүлээн зөвшөөрөгдсөн ёс</div>
<div class="ln" id="d_p19" style="left:386px;top:458.74px;width:247px;font-weight:400;">суртахууны сонгон дээр үндэслэн гэр бүлийг хамгаалах, танилцуулах үйл ажиллагааг</div>
<div class="ln" id="d_p20" style="left:386px;top:469.66px;width:247px;font-weight:400;">өргөжүүлэх, сайжруулах, хөгжүүлэх гэсэн утга санаатай юм. Ерөнхийдөө өөрт олгогдсон</div>
<div class="ln" id="d_p21" style="left:386px;top:480.59px;width:247px;font-weight:400;letter-spacing:-0.038px;">боловсролоор тухайн хүний нийгмийн статус шууд тодорхойлогдох ба эрэдэлээс өөрийгөө</div>
<div class="ln" id="d_p22" style="left:386px;top:491.51px;width:247px;font-weight:400;">хамгаалж чадаж байна уу үгүй юу гэдэг нь бас харагдах юм. Зөв бэлгийн боловсрол</div>
<div class="ln" id="d_p23" style="left:386px;top:502.44px;width:247px;font-weight:400;">эзэмшсэнээр тухай бүрд нь шинжилгээнд хамрагдаж, цэвэр байдлыг эрхэмлэн, хүний</div>
<div class="ln" id="d_p24" style="left:386px;top:513.37px;width:247px;font-weight:400;letter-spacing:-0.044px;">эрхээс шалтгаалах хэрэглээнүүдээ цэгцтэй байлгахад оршино. Бэлгийн амьдралын соёлын</div>
<div class="ln" id="d_p25" style="left:386px;top:524.29px;width:247px;font-weight:400;">үүднээс харилцаа үүсгэгчид хамгаалалт хэрэглэх түүнийгээ зориулалтын дагуу ашиглаж,</div>
<div class="ln" id="d_p26" style="left:386px;top:535.22px;width:247px;font-weight:400;letter-spacing:-0.021px;">хаях гэх мэт хувийн хамааралтай соёлын хүчин зүйлүүд хамаарна. Ингэснээр тааламжгүй</div>
<div class="ln" id="d_p27" style="left:386px;top:546.14px;width:247px;font-weight:400;">хэрэгтэй, эль эсвэл өөрийн хүрээллээс гадуурх, гэх мэт бэлгийн хавьтлаас өөрийгөө</div>
<div class="ln" id="d_q0" style="left:715px;top:221.34px;width:247px;font-weight:400;">сэргийлэхэд зогсолтгүй халдварт өвчин тусах магадлал ч 0 хувьтай байх юм. Хувь хүний</div>
<div class="ln" id="d_q1" style="left:715px;top:232.29px;width:247px;font-weight:400;letter-spacing:-0.038px;">бэлгийн амьдралын асуудал нийгэмд шууд яригдахгүй ч гэсэн дараа нь гарах үр дүн, зэрэг</div>
<div class="ln" id="d_q2" style="left:715px;top:243.24px;width:247px;font-weight:400;text-align:left;text-align-last:left;">болон сөрөг статусуудаас хамааран нийгэмтэй шууд хамааралтай болох юм.</div>
<div style="position:absolute;left:923px;top:246px;width:1px;height:6px;background:#000;"></div>
<svg style="position:absolute;left:690px;top:410px;" width="240" height="170" viewBox="0 0 240 170"><g stroke="#5B9BD5" stroke-width="1.2" fill="none"><path d="M6.5 16.4 H144"/><path d="M11.4 159.4 L225 157.4"/></g>
<path d="M146.8 16.4 L143 14.8 V18 Z M228.3 157.4 L224.5 155.8 L224.5 159 Z" fill="#5B9BD5"/></svg>
</body></html>
